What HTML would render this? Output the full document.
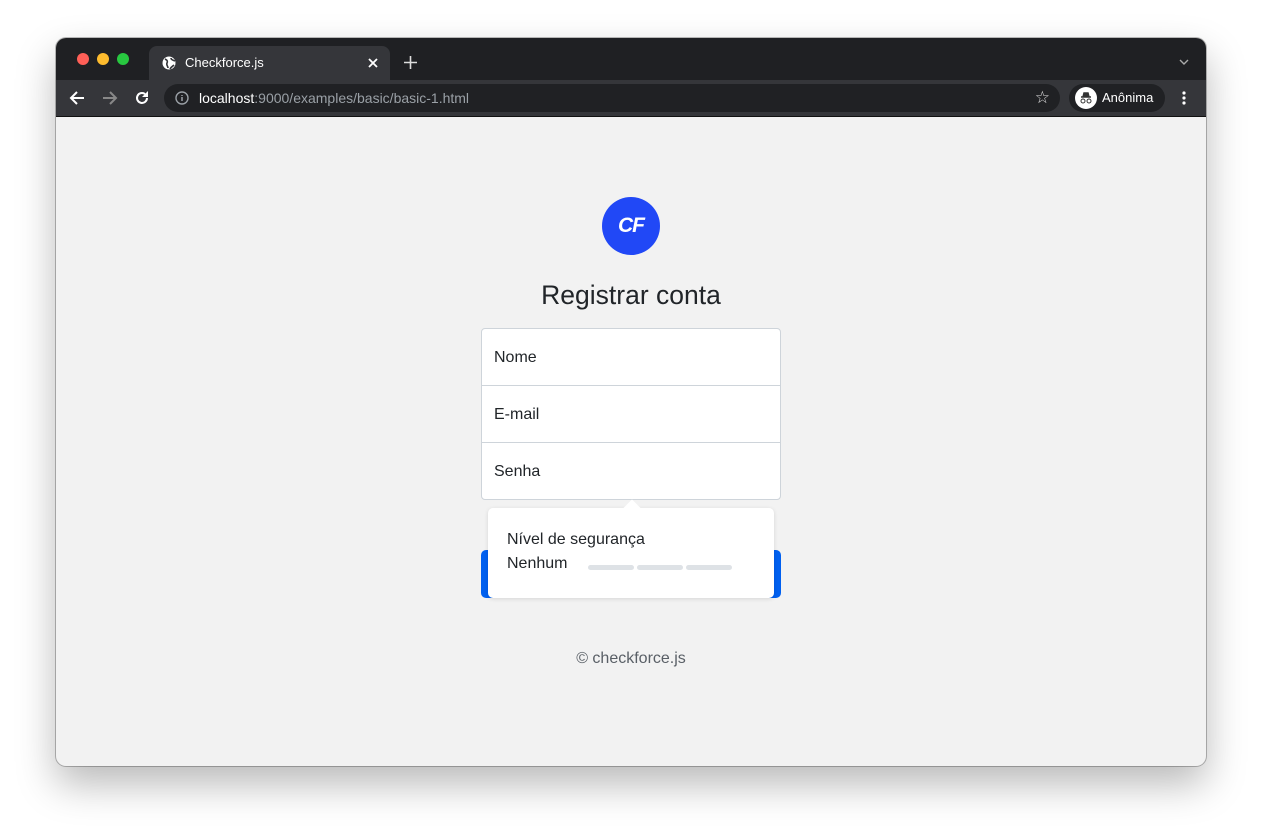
<!DOCTYPE html>
<html><head><meta charset="utf-8"><style>
*{box-sizing:border-box;margin:0;padding:0}
body{width:1262px;height:840px;background:#fff;font-family:"Liberation Sans",sans-serif;position:relative;overflow:hidden}
.win{position:absolute;left:56px;top:38px;width:1150px;height:728px;border-radius:10px;overflow:hidden;background:#f2f2f2;box-shadow:0 18px 40px rgba(0,0,0,.28),0 0 0 1px rgba(0,0,0,.25)}
.title{position:absolute;left:0;top:0;width:100%;height:42px;background:#1f2023}
.dot{position:absolute;top:15px;width:12px;height:12px;border-radius:50%}
.tab{position:absolute;left:93px;top:8px;width:241px;height:34px;background:#35363a;border-radius:8px 8px 0 0;color:#fff;font-size:13px}
.tool{position:absolute;left:0;top:42px;width:100%;height:37px;background:#35363a;border-bottom:1px solid #111}
.url{position:absolute;left:108px;top:4px;width:896px;height:28px;border-radius:14px;background:#202124;color:#9aa0a6;font-size:14px;line-height:28px;padding-left:35px}
.anon{position:absolute;left:1013px;top:4px;width:96px;height:28px;border-radius:14px;background:#202124;color:#fff;font-size:13px;line-height:28px;padding-left:33px}
.c{position:absolute;color:#212529}
.inp{position:absolute;left:425px;width:300px;height:58px;background:#fff;border:1px solid #ced4da;font-size:16px;line-height:58px;padding-left:12px;color:#212529}
.bar{display:inline-block;width:46px;height:5px;border-radius:3px;background:#dee2e6;margin-right:3px;vertical-align:middle}
</style></head><body>
<div class="win">
 <div class="title">
  <div class="dot" style="left:21px;background:#ff5f57"></div>
  <div class="dot" style="left:41px;background:#febc2e"></div>
  <div class="dot" style="left:61px;background:#28c840"></div>
  <div class="tab">
   <svg style="position:absolute;left:13px;top:10px" width="14" height="14" viewBox="0 0 14 14"><circle cx="7" cy="7" r="6.5" fill="#fff"/><path d="M3 3c2 1 3 2 2 4s1 3 1 5M9 2c0 2 2 2 4 3M8 13c1-2 3-3 4-4" stroke="#35363a" stroke-width="1.6" fill="none"/></svg>
   <span style="position:absolute;left:36px;top:9px">Checkforce.js</span>
   <svg style="position:absolute;left:219px;top:12px" width="10" height="10" viewBox="0 0 10 10"><path d="M1 1l8 8M9 1l-8 8" stroke="#fff" stroke-width="1.8"/></svg>
  </div>
  <svg style="position:absolute;left:348px;top:18px" width="13" height="13" viewBox="0 0 13 13"><path d="M6.5 0v13M0 6.5h13" stroke="#ddd" stroke-width="1.6"/></svg>
  <svg style="position:absolute;left:1123px;top:21px" width="10" height="6" viewBox="0 0 10 6"><path d="M1 1l4 4 4-4" stroke="#aaa" stroke-width="1.4" fill="none"/></svg>
 </div>
 <div class="tool">
  <svg style="position:absolute;left:13px;top:10px" width="16" height="16" viewBox="0 0 16 16"><path d="M15 8H2M8 2L2 8l6 6" stroke="#fff" stroke-width="2" fill="none"/></svg>
  <svg style="position:absolute;left:46px;top:10px" width="16" height="16" viewBox="0 0 16 16"><path d="M1 8h13M8 2l6 6-6 6" stroke="#888" stroke-width="2" fill="none"/></svg>
  <svg style="position:absolute;left:78px;top:10px" width="16" height="16" viewBox="0 0 16 16"><path d="M13 8a5 5 0 1 1-2-4" stroke="#fff" stroke-width="2" fill="none"/><path d="M14 1v6H8z" fill="#fff"/></svg>
  <div class="url"><svg style="position:absolute;left:11px;top:7px" width="14" height="14" viewBox="0 0 14 14"><circle cx="7" cy="7" r="6" stroke="#9aa0a6" stroke-width="1.4" fill="none"/><path d="M7 6v4M7 4v1" stroke="#9aa0a6" stroke-width="1.5"/></svg><span style="color:#fff">localhost</span>:9000/examples/basic/basic-1.html<span style="position:absolute;right:10px;top:0;color:#ddd;font-size:17px">☆</span></div>
  <div class="anon"><div style="position:absolute;left:6px;top:3px;width:22px;height:22px;border-radius:50%;background:#fff"><svg width="22" height="22" viewBox="0 0 22 22"><path d="M6 10h10M8 10l1-4h4l1 4" stroke="#333" stroke-width="1.5" fill="#333"/><circle cx="8" cy="14" r="2" stroke="#333" fill="none"/><circle cx="14" cy="14" r="2" stroke="#333" fill="none"/></svg></div>Anônima</div>
  <svg style="position:absolute;left:1126px;top:10px" width="4" height="16" viewBox="0 0 4 16"><circle cx="2" cy="3" r="1.6" fill="#fff"/><circle cx="2" cy="8" r="1.6" fill="#fff"/><circle cx="2" cy="13" r="1.6" fill="#fff"/></svg>
 </div>
 <div style="position:absolute;left:546px;top:159px;width:58px;height:58px;border-radius:50%;background:#2148f6;color:#fff;font:italic bold 21px/58px 'Liberation Sans',sans-serif;text-align:center;letter-spacing:-1px">CF</div>
 <div class="c" style="left:420px;width:310px;top:242px;text-align:center;font-size:26.5px">Registrar conta</div>
 <div class="inp" style="top:290px;border-radius:4px 4px 0 0">Nome</div>
 <div class="inp" style="top:347px">E-mail</div>
 <div class="inp" style="top:404px;border-radius:0 0 4px 4px;height:58px">Senha</div>
 <div style="position:absolute;left:425px;top:512px;width:300px;height:48px;border-radius:5px;background:#0060f0"></div>
 <div style="position:absolute;left:432px;top:470px;width:286px;height:90px;background:#fff;border-radius:5px;box-shadow:0 1px 4px rgba(0,0,0,.12)">
  <div style="position:absolute;left:138px;top:-6px;width:12px;height:12px;background:#fff;transform:rotate(45deg)"></div>
  <div class="c" style="left:19px;top:23px;font-size:16px">Nível de segurança</div>
  <div class="c" style="left:19px;top:47px;font-size:16px">Nenhum</div>
  <div style="position:absolute;left:100px;top:51px;white-space:nowrap"><span class="bar"></span><span class="bar"></span><span class="bar"></span></div>
 </div>
 <div style="position:absolute;left:425px;width:300px;top:612px;text-align:center;color:#595f66;font-size:16px">© checkforce.js</div>
</div>
</body></html>
